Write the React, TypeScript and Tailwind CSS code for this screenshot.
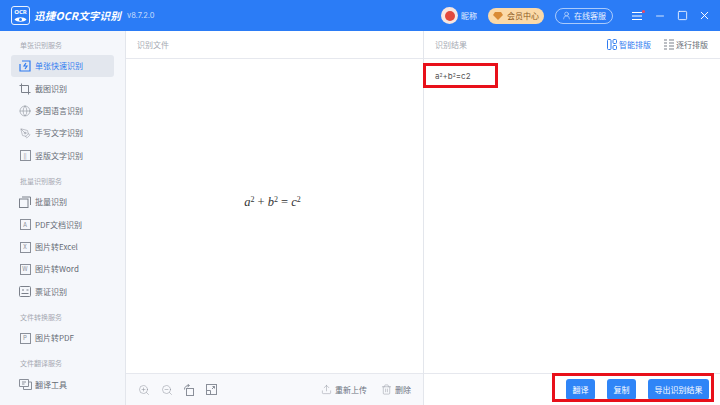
import { Globe, Minus, PenTool, Square, Trash2, Upload, UserRound, X, ZoomIn, ZoomOut } from "lucide-react";
import type { ReactNode } from "react";

const cjk = { fontFamily: '"Noto Sans CJK SC", sans-serif' };

const Box = ({ children }: { children: ReactNode }) => (
  <span className="flex size-[11px] items-center justify-center border border-[#8a8f99] text-[6px] leading-none text-[#8a8f99]">
    {children}
  </span>
);

const CropIcon = () => (
  <svg width="12" height="12" viewBox="0 0 12 12" fill="none" stroke="#7b808a" strokeWidth="1">
    <path d="M2.5 0.5V9.5H11.5M0.5 2.5H9.5V11.5" />
  </svg>
);

const FastIcon = () => (
  <svg width="12" height="12" viewBox="0 0 12 12" fill="none" stroke="#2f7bf0" strokeWidth="1.2">
    <path d="M3 1H11V11H1V4" />
    <path d="M7 3L5 6H8L6 9" />
  </svg>
);

const CardIcon = () => (
  <svg width="12" height="11" viewBox="0 0 12 11" fill="none" stroke="#7b808a" strokeWidth="1">
    <rect x=".5" y=".5" width="11" height="10" rx="1" />
    <path d="M3 4H5M7.5 4H9.5M2.5 7.5H9.5" strokeWidth="1.2" />
  </svg>
);

const TranslateIcon = () => (
  <svg width="13" height="11" viewBox="0 0 13 11" fill="none" stroke="#8a8f99" strokeWidth="1">
    <path d="M.5 .5H9.5V7.5H.5Z" />
    <path d="M9.5 3H12.5V10.5H4.5V7.5" />
    <path d="M3 3H7M3 5H5.5" />
  </svg>
);

const BatchIcon = () => (
  <svg width="12" height="12" viewBox="0 0 12 12" fill="none" stroke="#7b808a" strokeWidth="1">
    <rect x=".5" y="3" width="8.5" height="8.5" />
    <path d="M3 1H11.5V9" />
  </svg>
);

const SmartIcon = () => (
  <svg width="10" height="11" viewBox="0 0 10 11" fill="none" stroke="#2f7bf0" strokeWidth="1">
    <rect x=".5" y=".5" width="3.5" height="10" rx="1" />
    <rect x="6" y=".5" width="3.5" height="4" rx="1" />
    <rect x="6" y="6.5" width="3.5" height="4" rx="1" />
  </svg>
);

const LinesIcon = () => (
  <svg width="10" height="11" viewBox="0 0 10 11" fill="none" stroke="#7b808a" strokeWidth="1.2">
    <path d="M0 1H3M5 1H10M0 4H3M5 4H10M0 7H3M5 7H10M0 10H3M5 10H10" />
  </svg>
);

const RotateIcon = () => (
  <svg width="12" height="12" viewBox="0 0 12 12" fill="none" stroke="#8a8f99" strokeWidth="1">
    <rect x="3.5" y="4.5" width="7" height="7" />
    <path d="M1.5 5.5C1.5 3 3 1.5 6 1.5M4.5 0L6.5 1.5L4.5 3" />
  </svg>
);

const FitIcon = () => (
  <svg width="11" height="11" viewBox="0 0 11 11" fill="none" stroke="#8a8f99" strokeWidth="1">
    <rect x=".5" y=".5" width="10" height="10" />
    <path d="M.5 6.5H4.5V10.5M6 5L8.5 2.5M6.5 2.5H8.5V4.5" />
  </svg>
);

const sections: { title: string; items: { icon: ReactNode; label: string; active?: boolean }[] }[] = [
  {
    title: "单张识别服务",
    items: [
      { icon: <FastIcon />, label: "单张快速识别", active: true },
      { icon: <CropIcon />, label: "截图识别" },
      { icon: <Globe size={12} strokeWidth={1} color="#7b808a" />, label: "多国语言识别" },
      { icon: <PenTool size={11} strokeWidth={1} color="#7b808a" />, label: "手写文字识别" },
      { icon: <Box>||</Box>, label: "竖版文字识别" },
    ],
  },
  {
    title: "批量识别服务",
    items: [
      { icon: <BatchIcon />, label: "批量识别" },
      { icon: <Box>A</Box>, label: "PDF文档识别" },
      { icon: <Box>X</Box>, label: "图片转Excel" },
      { icon: <Box>W</Box>, label: "图片转Word" },
      { icon: <CardIcon />, label: "票证识别" },
    ],
  },
  { title: "文件转换服务", items: [{ icon: <Box>P</Box>, label: "图片转PDF" }] },
  { title: "文件翻译服务", items: [{ icon: <TranslateIcon />, label: "翻译工具" }] },
];

const Header = () => (
  <header className="flex h-[31px] shrink-0 items-center bg-[#2b7cf6] pl-[11px] pr-[9.5px] text-white">
    <div className="flex size-[19px] flex-col items-center justify-center rounded-[3px] border border-white/90 leading-none">
      <span className="text-[6px] font-bold leading-[7px]">OCR</span>
      <svg width="13" height="7" viewBox="0 0 13 7">
        <path d="M.5 3.5C3 .5 10 .5 12.5 3.5C10 6.5 3 6.5 .5 3.5Z" fill="white" />
        <circle cx="6.5" cy="3.5" r="1.5" fill="#2b7cf6" />
      </svg>
    </div>
    <span className="ml-[4px] text-[10.5px] font-bold italic tracking-[0.2px]" style={cjk}>
      迅捷OCR文字识别
    </span>
    <span className="ml-[6px] text-[7.5px] text-white/75" style={{ fontFamily: "Inter, sans-serif" }}>
      v8.7.2.0
    </span>

    <div className="ml-auto flex items-center">
      <span className="flex size-[17px] items-center justify-center rounded-full bg-[#f8e6e0]">
        <span className="size-[10px] rounded-full bg-[#e2483d]" />
      </span>
      <span className="ml-[3px] text-[8px] text-white/90" style={cjk}>
        昵称
      </span>
      <span
        className="ml-[11px] flex h-[16px] w-[56px] items-center justify-center gap-[4px] rounded-full bg-[#fbd9a8] text-[8px] text-[#8b5a1e]"
        style={cjk}
      >
        <svg width="10" height="8" viewBox="0 0 10 8">
          <path d="M2 0H8L10 3L5 8L0 3Z" fill="#d98a35" />
        </svg>
        会员中心
      </span>
      <span
        className="ml-[11px] flex h-[16px] w-[58px] items-center justify-center gap-[3px] rounded-full border border-white/60 text-[8px] text-white/90"
        style={cjk}
      >
        <UserRound size={9} strokeWidth={1.4} />
        在线客服
      </span>
      <div className="relative ml-[19px]">
        <svg width="10" height="10" viewBox="0 0 10 10" stroke="white" strokeWidth="1.2">
          <path d="M0 1.5H10M0 5H10M0 8.5H10" />
        </svg>
        <span className="absolute -right-[3px] -top-[1px] size-[3px] rounded-full bg-[#f2495c]" />
      </div>
      <Minus className="ml-[11.5px]" size={12} strokeWidth={1.6} />
      <Square className="ml-[11px]" size={11} strokeWidth={1.8} />
      <X className="ml-[10px]" size={13} strokeWidth={1.8} />
    </div>
  </header>
);

const Sidebar = () => (
  <aside
    className="flex w-[126px] shrink-0 flex-col border-r border-[#e3e6ec] bg-[#f5f7fb] pl-[11px] pr-[11px] pt-[5.5px]"
    style={cjk}
  >
    {sections.map((s) => (
      <div key={s.title} className="mb-[5.6px]">
        <div className="mb-[1.5px] flex h-[17px] items-center pl-[9px] text-[7px] text-[#a5a9b2]">{s.title}</div>
        <div className="flex flex-col">
          {s.items.map((item) => (
            <div
              key={item.label}
              className={`flex h-[22.4px] items-center rounded-[3px] text-[8px] ${
                item.active ? "bg-[#e3e7ee] text-[#2f7bf0]" : "text-[#666b75]"
              }`}
            >
              <span className="flex w-[24px] shrink-0 items-center justify-center pl-[4px]">{item.icon}</span>
              <span>{item.label}</span>
            </div>
          ))}
        </div>
      </div>
    ))}
  </aside>
);

const LeftPane = () => (
  <section className="flex w-[298px] shrink-0 flex-col border-r border-[#e3e6ec]" style={cjk}>
    <div className="flex h-[28px] shrink-0 items-center border-b border-[#e6e8ee] pl-[11px] text-[8px] text-[#a5a9b2]">
      识别文件
    </div>
    <div className="flex flex-1 items-center justify-center pb-[28px] pr-[4px]">
      <span className="text-[12.5px] italic text-[#333]" style={{ fontFamily: '"Liberation Serif", serif' }}>
        a<sup className="text-[8px] not-italic">2</sup> <span className="not-italic">+</span> b
        <sup className="text-[8px] not-italic">2</sup> <span className="not-italic">=</span> c
        <sup className="text-[8px] not-italic">2</sup>
      </span>
    </div>
    <div className="flex h-[32px] shrink-0 items-center border-t border-[#e6e8ee] bg-[#f8f9fc] pl-[12px] pr-[12px] text-[8px] text-[#6b7280]">
      <ZoomIn size={12} strokeWidth={1} color="#8a8f99" />
      <ZoomOut className="ml-[11px]" size={12} strokeWidth={1} color="#8a8f99" />
      <span className="ml-[10px]">
        <RotateIcon />
      </span>
      <span className="ml-[11px]">
        <FitIcon />
      </span>
      <Upload className="ml-auto" size={11} strokeWidth={1} color="#8a8f99" />
      <span className="ml-[3px]">重新上传</span>
      <Trash2 className="ml-[14px]" size={11} strokeWidth={1} color="#8a8f99" />
      <span className="ml-[3px]">删除</span>
    </div>
  </section>
);

const RightPane = () => (
  <section className="relative flex min-w-0 flex-1 flex-col" style={cjk}>
    <div className="flex h-[28px] shrink-0 items-center border-b border-[#e6e8ee] pl-[11px] pr-[12px] text-[8px]">
      <span className="text-[#a5a9b2]">识别结果</span>
      <span className="ml-auto flex items-center gap-[2px] text-[#2f7bf0]">
        <SmartIcon />
        智能排版
      </span>
      <span className="ml-[13px] flex items-center gap-[2px] text-[#666b75]">
        <LinesIcon />
        逐行排版
      </span>
    </div>
    <div className="flex-1 pl-[11px] pt-[11px] text-[8px] leading-[12px] text-[#555]" style={{ fontFamily: "Inter, sans-serif" }}>
      a<sup className="text-[5px]">2</sup>+b<sup className="text-[5px]">2</sup>=c2
    </div>
    <div className="flex h-[32px] shrink-0 items-center justify-end gap-[12px] border-t border-[#e6e8ee] pr-[11px] text-[8px] text-white">
      <button className="h-[21px] w-[29px] rounded-[3px] bg-[#2f85f7]">翻译</button>
      <button className="h-[21px] w-[29px] rounded-[3px] bg-[#2f85f7]">复制</button>
      <button className="h-[21px] w-[61px] rounded-[3px] bg-[#2f85f7]">导出识别结果</button>
    </div>
    <div className="absolute -left-px top-[32px] h-[25px] w-[75px] border-[3px] border-[#e8101a]" />
    <div className="absolute bottom-[3px] left-[128px] h-[29px] w-[162px] border-[3px] border-[#e8101a]" />
  </section>
);

export default function App() {
  return (
    <div className="flex h-[405px] w-[720px] flex-col overflow-hidden bg-white">
      <Header />
      <div className="flex min-h-0 flex-1">
        <Sidebar />
        <LeftPane />
        <RightPane />
      </div>
    </div>
  );
}
